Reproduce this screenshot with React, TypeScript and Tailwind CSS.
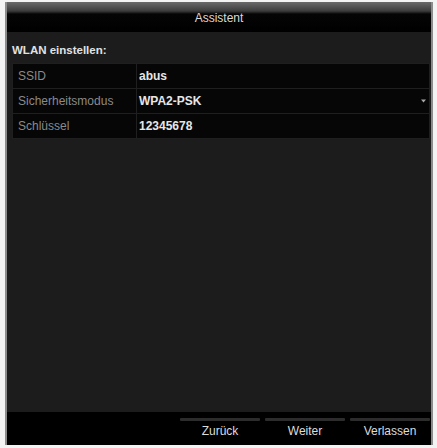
const rows = [
  { label: "SSID", value: "abus" },
  { label: "Sicherheitsmodus", value: "WPA2-PSK", select: true },
  { label: "Schlüssel", value: "12345678" },
];

const buttons = ["Zurück", "Weiter", "Verlassen"];

export default function App() {
  return (
    <div
      className="w-[437px] h-[448px] bg-[#f3f3f3] pt-[2px] pl-[5px] pr-[4px] pb-[3px]"
      style={{ fontFamily: '"Liberation Sans", Arial, sans-serif' }}
    >
      <div className="h-full flex flex-col border-x-2 border-[#8c8c8c] bg-[#1c1c1c]">
        {/* title bar */}
        <div className="h-[30px] flex items-center justify-center bg-[linear-gradient(#6a6a6a,#3c3c3c_30%,#050505_40%,#000)] text-[12px] text-[#dadada] pt-[1px]">
          Assistent
        </div>

        <div className="flex-1 flex flex-col pl-[5px] pr-[1px]">
          <div className="h-[31px] flex items-end pb-[4px] text-[11.5px] font-bold text-[#e2e2e2]">
            WLAN einstellen:
          </div>

          <div className="flex flex-col gap-[1px] bg-[#1f1f1f] p-[1px]">
            {rows.map((r) => (
              <div key={r.label} className="h-[24px] flex bg-[#060606] text-[12px]">
                <div className="w-[124px] flex items-center pl-[5px] text-[#8a8a8a] border-r border-[#1f1f1f]">
                  {r.label}
                </div>
                <div className="flex-1 flex items-center justify-between pl-[2px] pr-[3px] font-bold text-[#e6e6e6]">
                  <span>{r.value}</span>
                  {r.select && (
                    <svg width="5" height="4" viewBox="0 0 5 4">
                      <path d="M0 0.5 L2.5 3.5 L5 0.5" fill="#a8a8a8" />
                    </svg>
                  )}
                </div>
              </div>
            ))}
          </div>
        </div>

        {/* footer buttons */}
        <div className="h-[33px] bg-black flex justify-end gap-[5px] pr-[1px] pt-[6px]">
          {buttons.map((b) => (
            <div key={b} className="w-[80px] flex flex-col items-center">
              <div className="w-full h-[3px] bg-[#2c2c2c] rounded-[1px]" />
              <div className="mt-[3px] text-[12px] text-[#dcdcdc] leading-[14px]">{b}</div>
            </div>
          ))}
        </div>
      </div>
    </div>
  );
}
